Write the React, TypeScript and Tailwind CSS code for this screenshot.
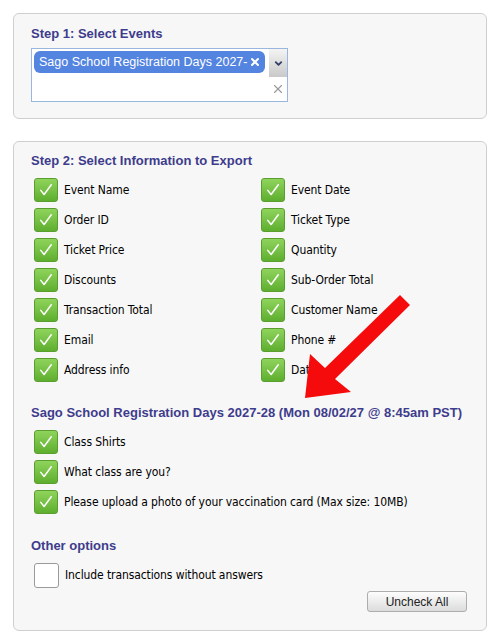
import { ChevronDown, X } from "lucide-react";

const LEFT_FIELDS = ["Event Name", "Order ID", "Ticket Price", "Discounts", "Transaction Total", "Email", "Address info"];
const RIGHT_FIELDS = ["Event Date", "Ticket Type", "Quantity", "Sub-Order Total", "Customer Name", "Phone #", "Date"];
const QUESTIONS = ["Class Shirts", "What class are you?", "Please upload a photo of your vaccination card (Max size: 10MB)"];

const headingCls = "h-4 text-[13px] font-bold leading-4 text-[#3e3c8c] [font-family:'Liberation_Sans',Arial,sans-serif]";

function GreenCheck() {
  return (
    <span className="grid size-6 shrink-0 place-items-center rounded-[3px] border border-[#5a9e2f] bg-gradient-to-b from-[#8fd45c] to-[#5eae2e]">
      <svg viewBox="0 0 24 24" className="size-[18px]" fill="none" stroke="white" strokeWidth="2" strokeLinecap="round" strokeLinejoin="round">
        <path d="M5 12.5 L9.5 18 L19 5" />
      </svg>
    </span>
  );
}

function CheckRow({ label, checked = true }: { label: string; checked?: boolean }) {
  return (
    <div className="flex h-[30px] items-center gap-[6px] pl-[3px]">
      {checked ? (
        <GreenCheck />
      ) : (
        <span className="size-[25px] shrink-0 rounded-[3px] border border-[#9a9a9a] bg-white" />
      )}
      <span className="whitespace-nowrap text-[12px] tracking-[-0.1px] text-black [font-family:'DejaVu_Sans_Condensed','Liberation_Sans',sans-serif]">
        {label}
      </span>
    </div>
  );
}

export default function App() {
  return (
    <div className="relative h-[643px] w-[500px] overflow-hidden bg-white pt-[13px]">
      <section className="mx-[13px] h-[106px] rounded-[6px] border border-[#cfcfcf] bg-[#f7f7f7] px-[17px] pt-[12px]">
        <h2 className={headingCls}>Step 1: Select Events</h2>
        <div className="mt-[6px] flex h-[54px] w-[257px] border border-[#98b6de] bg-white">
          <div className="flex-1 p-[2px]">
            <span className="flex h-[22px] w-[231px] items-center overflow-hidden rounded-[6px] bg-[#5384df] pl-[5px] pr-[4px] text-[12.5px] text-white [font-family:'Liberation_Sans',Arial,sans-serif]">
              <span className="flex-1 overflow-hidden whitespace-nowrap">Sago School Registration Days 2027-28</span>
              <X size={12} strokeWidth={4} className="ml-[1px] shrink-0" />
            </span>
          </div>
          <div className="flex w-[18px] flex-col">
            <div className="grid h-[28px] place-items-center bg-gradient-to-b from-[#f4f4f4] to-[#c9c9c9]">
              <ChevronDown size={11} strokeWidth={4} className="text-[#2f3f66]" />
            </div>
            <div className="grid flex-1 place-items-center">
              <X size={14} strokeWidth={2} className="text-[#9a9a9a]" />
            </div>
          </div>
        </div>
      </section>

      <section className="mx-[13px] mt-[22px] h-[490px] rounded-[6px] border border-[#cfcfcf] bg-[#f7f7f7] px-[17px] pt-[11px]">
        <h2 className={headingCls}>Step 2: Select Information to Export</h2>
        <div className="mt-[6px] grid grid-cols-[227px_1fr]">
          <div>
            {LEFT_FIELDS.map((f) => (
              <CheckRow key={f} label={f} />
            ))}
          </div>
          <div>
            {RIGHT_FIELDS.map((f) => (
              <CheckRow key={f} label={f} />
            ))}
          </div>
        </div>

        <h2 className={`mt-[20px] ${headingCls}`}>Sago School Registration Days 2027-28 (Mon 08/02/27 @ 8:45am PST)</h2>
        <div className="mt-[6px]">
          {QUESTIONS.map((q) => (
            <CheckRow key={q} label={q} />
          ))}
        </div>

        <h2 className={`mt-[21px] ${headingCls}`}>Other options</h2>
        <div className="mt-[6px]">
          <CheckRow label="Include transactions without answers" checked={false} />
        </div>
        <div className="mt-[1px] flex justify-end pr-[2px]">
          <button
            type="button"
            className="h-[21px] w-[100px] rounded-[3px] border border-[#adadad] bg-gradient-to-b from-[#fdfdfd] to-[#dcdcdc] text-[12px] text-[#222] [font-family:'Liberation_Sans',Arial,sans-serif]"
          >
            Uncheck All
          </button>
        </div>
      </section>

      {/* red annotation arrow */}
      <svg className="pointer-events-none absolute left-0 top-0" width="500" height="643" viewBox="0 0 500 643">
        <polygon points="305,398 310,354 325,368 400,295 410,305 335,379 351,392" fill="#f50b0b" />
      </svg>
    </div>
  );
}
